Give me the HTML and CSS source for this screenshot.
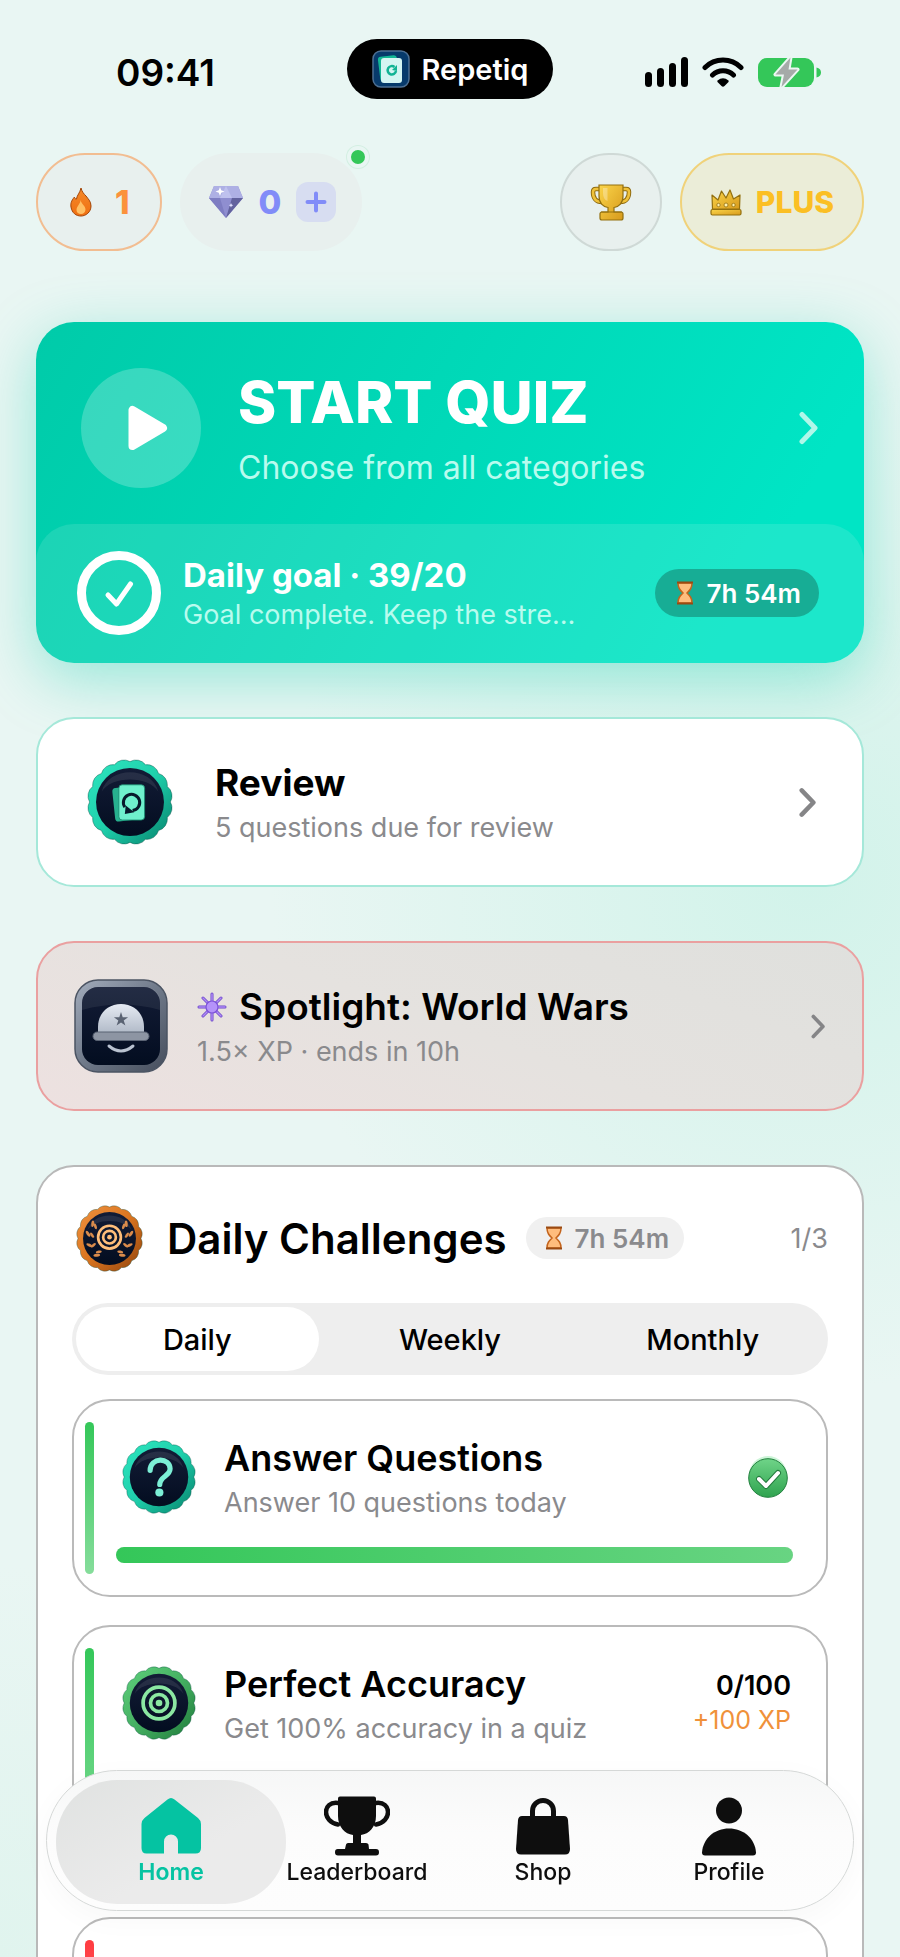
FILE: index.html
```html
<!DOCTYPE html>
<html lang="en">
<head>
    <meta charset="UTF-8">
    <meta name="viewport" content="width=device-width, initial-scale=1.0">
    <title>Repetiq</title>
    <link rel="stylesheet" href="styles.css">
</head>
<body>
    <!-- Shared shapes -->
    <svg class="defs" width="0" height="0" aria-hidden="true">
        <defs>
            <linearGradient id="teal" x1="0" y1="0" x2="1" y2="1">
                <stop offset="0" stop-color="#2ee6c0"/><stop offset=".5" stop-color="#1fcfab"/><stop offset="1" stop-color="#05806a"/>
            </linearGradient>
            <linearGradient id="green" x1="0" y1="0" x2="1" y2="1">
                <stop offset="0" stop-color="#5fd07c"/><stop offset=".5" stop-color="#45b062"/><stop offset="1" stop-color="#1f7a3a"/>
            </linearGradient>
            <linearGradient id="orange" x1="0" y1="0" x2="1" y2="1">
                <stop offset="0" stop-color="#f09340"/><stop offset=".5" stop-color="#d97420"/><stop offset="1" stop-color="#8f430c"/>
            </linearGradient>
            <linearGradient id="night" x1="0" y1="0" x2="0" y2="1">
                <stop offset="0" stop-color="#131c36"/><stop offset="1" stop-color="#030d20"/>
            </linearGradient>
            <linearGradient id="gold" x1="0" y1="0" x2="1" y2="1">
                <stop offset="0" stop-color="#fbd54a"/><stop offset="1" stop-color="#d79a1c"/>
            </linearGradient>
            <linearGradient id="steel" x1="0" y1="0" x2="1" y2="1">
                <stop offset="0" stop-color="#a3adbd"/><stop offset=".5" stop-color="#6f7989"/><stop offset="1" stop-color="#454d5c"/>
            </linearGradient>
            <linearGradient id="helmet" x1="0" y1="0" x2="0" y2="1">
                <stop offset="0" stop-color="#e6ebf3"/><stop offset="1" stop-color="#b1bac8"/>
            </linearGradient>
            <linearGradient id="check" x1="0" y1="0" x2="0" y2="1">
                <stop offset="0" stop-color="#6fd488"/><stop offset="1" stop-color="#2fa34f"/>
            </linearGradient>
            <linearGradient id="flame" x1="0" y1="0" x2="0" y2="1">
                <stop offset="0" stop-color="#f58a2a"/><stop offset="1" stop-color="#ef7012"/>
            </linearGradient>
            <symbol id="scallop" viewBox="0 0 100 100">
                <path stroke="#0b4f45" stroke-opacity=".5" stroke-width="1" d="M50 3A14 14 0 0 1 68 6.6 14 14 0 0 1 83.2 16.8 14 14 0 0 1 93.4 32 14 14 0 0 1 97 50 14 14 0 0 1 93.4 68 14 14 0 0 1 83.2 83.2 14 14 0 0 1 68 93.4 14 14 0 0 1 50 97 14 14 0 0 1 32 93.4 14 14 0 0 1 16.8 83.2 14 14 0 0 1 6.6 68 14 14 0 0 1 3 50 14 14 0 0 1 6.6 32 14 14 0 0 1 16.8 16.8 14 14 0 0 1 32 6.6 14 14 0 0 1 50 3z"/>
                <circle cx="50" cy="50" r="39.5" fill="url(#night)"/>
                <path d="M17 38C25 8 75 8 83 38 72 19 28 19 17 38z" fill="#fff" opacity=".09"/>
            </symbol>
            <symbol id="hourglass" viewBox="0 0 18 24">
                <path d="M2 2h14c0 5-2 7-5 10 3 3 5 5 5 10H2c0-5 2-7 5-10-3-3-5-5-5-10z" fill="#ffbd7d" stroke="#c4641c" stroke-width="1.5"/>
                <path d="M1 1.5h16M1 22.5h16" stroke="#9a4a12" stroke-width="2"/>
            </symbol>
            <symbol id="chevron" viewBox="0 0 20 34">
                <path d="M3 3.5l13 13.5-13 13.5" fill="none" stroke="currentColor" stroke-width="5" stroke-linecap="round" stroke-linejoin="round"/>
            </symbol>
        </defs>
    </svg>

    <div class="app">
        <header class="header">
            <div class="status-bar">
                <time class="clock">09:41</time>
                <div class="island">
                    <svg width="38" height="38" viewBox="0 0 38 38">
                        <rect x="1" y="1" width="36" height="36" rx="8" fill="#073a6b" stroke="#4d6f92" stroke-width="1.5"/>
                        <rect x="7" y="6" width="19" height="25" rx="3" fill="#14b795" transform="rotate(-7 16 18)"/>
                        <rect x="9" y="8" width="21" height="25" rx="3" fill="#d5f5f2"/>
                        <path d="M22.5 17a4.2 4.2 0 1 0 1.5 4" fill="none" stroke="#12b394" stroke-width="2.5"/>
                        <path d="M20 20l5-5v6z" fill="#12b394"/>
                    </svg>
                    <span>Repetiq</span>
                </div>
                <div class="indicators">
                    <svg width="43" height="30" viewBox="0 0 43 30">
                        <rect y="15" width="7" height="15" rx="3.5"/>
                        <rect x="12" y="11" width="7" height="19" rx="3.5"/>
                        <rect x="24" y="6" width="7" height="24" rx="3.5"/>
                        <rect x="36" width="7" height="30" rx="3.5"/>
                    </svg>
                    <svg width="42" height="30" viewBox="0 0 42 30">
                        <path d="M3 10.5a25.5 25.5 0 0 1 36 0M10.5 18a15 15 0 0 1 21 0" fill="none" stroke="#000" stroke-width="5" stroke-linecap="round"/>
                        <path d="M15.5 23.5q5.5-4.5 11 0 .5 1-.5 2l-3.5 3.5q-1.5 1.5-3 0L16 25.5q-1-1-.5-2z"/>
                    </svg>
                    <svg width="64" height="32" viewBox="0 0 64 32">
                        <rect y="2" width="56" height="29" rx="9" fill="#34c759"/>
                        <path d="M58.5 11.500v10q4.500-1 4.500-5t-4.500-5z" fill="#34c759"/>
                        <path d="M32.5 1.500L17.500 18.500h8.500L23.500 31 39.500 13.500h-9z" fill="#a5aaa8" stroke="#ebf7f2" stroke-width="4" stroke-linejoin="round" paint-order="stroke"/>
                    </svg>
                </div>
            </div>

            <div class="stats">
                <button class="pill streak" aria-label="1 day streak">
                    <svg width="22" height="30" viewBox="0 0 22 30">
                        <path d="M11 1c-1 5-4 7-4.500 11C5 12 4.500 11 4.500 10 1 14 .5 17 1 20c1 6 5 9 10 9s10-4 10-10c0-5-3-7-5-10-2-2-4-4-5-8z" fill="url(#flame)" stroke="#a34508"/>
                        <path d="M10.500 13c0 4-4 6-4 10 0 2.500 2 4 4.500 4s4.500-2 4.500-4.500c0-4-4-5-5-9.500z" fill="#ffbf63"/>
                    </svg>
                    <span>1</span>
                </button>
                <button class="pill gems" aria-label="0 gems, add more">
                    <svg width="36" height="34" viewBox="0 0 36 34">
                        <path d="M6 1h24l5 12-17 20L1 13z" fill="#8f8ed0"/>
                        <path d="M6 1h24l5 12H1z" fill="#aeb0e4"/>
                        <path d="M12 13l6-12 6 12z" fill="#bfc1ee"/>
                        <path d="M24 13h11L18 33z" fill="#62629e"/>
                        <path d="M1 13h11l6 20z" fill="#7e7dc2"/>
                        <path d="M12 2l1.200 3.300 3.300 1.200-3.300 1.200L12 11l-1.200-3.300-3.300-1.200 3.300-1.200z" fill="#fff"/>
                        <path d="M23 18l.7 1.500 1.500.7-1.500.7-.7 1.500-.7-1.500-1.500-.7 1.500-.7z" fill="#dfe0ff"/>
                    </svg>
                    <span>0</span>
                    <svg width="40" height="40" viewBox="0 0 40 40">
                        <rect width="40" height="40" rx="12" fill="#d7ddf1"/>
                        <path d="M20 11.500v17M11.500 20h17" stroke="#818cf8" stroke-width="4" stroke-linecap="round"/>
                    </svg>
                    <i class="dot"></i>
                </button>
                <button class="pill trophy" aria-label="Achievements">
                    <svg width="42" height="37" viewBox="0 0 42 37">
                        <path d="M10 5H6q-3 0-3 3c0 6 3 10 9 10M32 5h4q3 0 3 3c0 6-3 10-9 10" fill="none" stroke="#8f6b10" stroke-width="4.500"/>
                        <path d="M10 5H6q-3 0-3 3c0 6 3 10 9 10M32 5h4q3 0 3 3c0 6-3 10-9 10" fill="none" stroke="#efc13a" stroke-width="2.500"/>
                        <path d="M9 1h24v11c0 7-4 11-9 11.500V28h7q2 0 2 2v4q0 2-2 2H12q-2 0-2-2v-4q0-2 2-2h6v-4.500C13 23 9 19 9 12z" fill="url(#gold)" stroke="#93700f" stroke-width="1.200"/>
                        <path d="M11 28h21" stroke="#93700f"/>
                        <path d="M13 4h4.500v13c-3-1-4.500-4-4.500-8z" fill="#fff" opacity=".3"/>
                    </svg>
                </button>
                <button class="pill plus">
                    <svg width="32" height="27" viewBox="0 0 32 27">
                        <path d="M2.500 20L2 6l6 5 3.500-9L16 9l4-8 3.500 9L30 6l-.5 14z" fill="url(#gold)" stroke="#93700f" stroke-width="1.200" stroke-linejoin="round"/>
                        <rect x="1" y="20.500" width="30" height="5.500" rx="1.500" fill="url(#gold)" stroke="#93700f" stroke-width="1.200"/>
                        <g fill="#fff1b0" stroke="#93700f" stroke-width=".8"><circle cx="8.500" cy="16" r="1.700"/><circle cx="16" cy="16" r="2"/><circle cx="23.500" cy="16" r="1.700"/></g>
                    </svg>
                    <span>PLUS</span>
                </button>
            </div>
        </header>

        <main class="content">
            <section class="hero">
                <a class="hero-main" href="#quiz">
                    <span class="play">
                        <svg width="40" height="46" viewBox="0 0 40 46"><path d="M4.500 5v36L35 23z" fill="#fff" stroke="#fff" stroke-width="8" stroke-linejoin="round"/></svg>
                    </span>
                    <span class="text">
                        <strong class="hero-title">START QUIZ</strong>
                        <span class="hero-subtitle">Choose from all categories</span>
                    </span>
                    <svg class="chevron" width="20" height="34"><use href="#chevron"/></svg>
                </a>
                <div class="goal">
                    <svg width="84" height="84" viewBox="0 0 84 84" fill="none" stroke="#fff">
                        <circle cx="42" cy="42" r="37.500" stroke-width="9"/>
                        <path d="M31 44l8.500 9L53.500 33" stroke-width="5" stroke-linecap="round" stroke-linejoin="round"/>
                    </svg>
                    <span class="text">
                        <strong class="goal-title">Daily goal · 39/20</strong>
                        <span class="goal-subtitle">Goal complete. Keep the stre…</span>
                    </span>
                    <span class="timer timer-dark">
                        <svg width="18" height="24"><use href="#hourglass"/></svg>
                        7h 54m
                    </span>
                </div>
            </section>

            <a class="card review" href="#review">
                <svg width="86" height="86" viewBox="0 0 100 100">
                    <use href="#scallop" fill="url(#teal)"/>
                    <rect x="31" y="33" width="26" height="39" rx="4" fill="#27b08e" transform="rotate(-6 42 52)"/>
                    <rect x="37" y="30" width="30" height="41" rx="4" fill="#6ff0cd" stroke="#1a8a70"/>
                    <path d="M44 56a9.500 9.500 0 1 1 9 4" fill="none" stroke="#07192b" stroke-width="3.500"/>
                    <path d="M45 54l-1 10 11-2z" fill="#07192b"/>
                </svg>
                <span class="text">
                    <strong class="title">Review</strong>
                    <span class="subtitle">5 questions due for review</span>
                </span>
                <svg class="chevron" width="18" height="31"><use href="#chevron"/></svg>
            </a>

            <a class="card spotlight" href="#spotlight">
                <svg width="94" height="94" viewBox="0 0 94 94">
                    <rect x="1" y="1" width="92" height="92" rx="23" fill="url(#steel)" stroke="#4b5463" stroke-width="1.500"/>
                    <rect x="8" y="8" width="78" height="78" rx="16" fill="url(#night)"/>
                    <path d="M8 31V24Q8 8 24 8h46q16 0 16 16v7Q47 20 8 31z" fill="#fff" opacity=".07"/>
                    <path d="M24 54V48c0-14 10-23 23-23s23 9 23 23v6z" fill="url(#helmet)"/>
                    <path d="M47 33l1.700 5.200h5.400l-4.400 3.200 1.700 5.200-4.400-3.200-4.400 3.200 1.700-5.200-4.400-3.200h5.400z" fill="#5a6373"/>
                    <rect x="19" y="53" width="56" height="8.500" rx="4.200" fill="#8d95a3" stroke="#5b6474"/>
                    <path d="M35 67q12 10 24 0" fill="none" stroke="#b9c2d0" stroke-width="3" stroke-linecap="round"/>
                </svg>
                <span class="text">
                    <strong class="title with-icon">
                        <svg width="30" height="30" viewBox="0 0 30 30">
                            <g stroke-linecap="round" stroke="#6b46c9" stroke-width="3"><path d="M15 2v26M2 15h26M6 6l18 18M24 6L6 24"/></g>
                            <g stroke-linecap="round" stroke="#b08bf5" stroke-width="1.500"><path d="M15 2v26M2 15h26M6 6l18 18M24 6L6 24"/></g>
                            <circle cx="15" cy="15" r="6" fill="#b593fa" stroke="#7c52d8" stroke-width="1.200"/>
                        </svg>
                        Spotlight: World Wars
                    </strong>
                    <span class="subtitle">1.5× XP · ends in 10h</span>
                </span>
                <svg class="chevron" width="15" height="25"><use href="#chevron"/></svg>
            </a>

            <section class="panel">
                <div class="panel-head">
                    <svg width="67" height="67" viewBox="0 0 100 100">
                        <use href="#scallop" fill="url(#orange)"/>
                        <g fill="none" stroke="#ffbe7a" stroke-width="4"><circle cx="50" cy="48" r="17"/><circle cx="50" cy="48" r="9.500"/></g>
                        <circle cx="50" cy="48" r="3.500" fill="#ffbe7a"/>
                        <g fill="#d98b4c">
                            <g id="leaves">
                                <ellipse cx="25" cy="28" rx="2.200" ry="5" transform="rotate(5 25 28)"/><ellipse cx="29" cy="32" rx="2" ry="4.500" transform="rotate(-20 29 32)"/>
                                <ellipse cx="18" cy="43" rx="2.200" ry="5" transform="rotate(-35 18 43)"/><ellipse cx="24" cy="45" rx="2" ry="4.500" transform="rotate(-35 24 45)"/>
                                <ellipse cx="20" cy="60" rx="2.200" ry="5" transform="rotate(-65 20 60)"/><ellipse cx="26" cy="60" rx="2" ry="4.500" transform="rotate(50 26 60)"/>
                                <ellipse cx="31" cy="75" rx="2.200" ry="5" transform="rotate(80 31 75)"/><ellipse cx="34" cy="70" rx="2" ry="4.500" transform="rotate(80 34 70)"/>
                            </g>
                            <use href="#leaves" transform="translate(100 0) scale(-1 1)"/>
                        </g>
                    </svg>
                    <h2>Daily Challenges</h2>
                    <span class="timer">
                        <svg width="18" height="24"><use href="#hourglass"/></svg>
                        7h 54m
                    </span>
                    <span class="count">1/3</span>
                </div>

                <div class="tabs" role="tablist">
                    <button class="tab active" role="tab" aria-selected="true">Daily</button>
                    <button class="tab" role="tab" aria-selected="false">Weekly</button>
                    <button class="tab" role="tab" aria-selected="false">Monthly</button>
                </div>

                <article class="challenge">
                    <i class="stripe"></i>
                    <div class="challenge-body">
                        <div class="challenge-row">
                            <svg width="74" height="74" viewBox="0 0 100 100">
                                <use href="#scallop" fill="url(#teal)"/>
                                <path d="M38 41c0-18 27-18 27-2 0 10-14 10-14 21" fill="none" stroke="#7cefd6" stroke-width="7" stroke-linecap="round"/>
                                <circle cx="50.500" cy="71" r="5.500" fill="#7cefd6"/>
                            </svg>
                            <div class="text">
                                <h3 class="title">Answer Questions</h3>
                                <p class="subtitle">Answer 10 questions today</p>
                            </div>
                            <svg class="done" width="40" height="44" viewBox="0 0 40 44">
                                <circle cx="20" cy="20" r="19" fill="#cdf5d8"/>
                                <circle cx="20" cy="23" r="19.300" fill="url(#check)" stroke="#23803f"/>
                                <path d="M11 24l7 7 12-13" fill="none" stroke="#237a3d" stroke-width="6" stroke-linecap="round" stroke-linejoin="round"/>
                                <path d="M11 24l7 7 12-13" fill="none" stroke="#fff" stroke-width="4" stroke-linecap="round" stroke-linejoin="round"/>
                            </svg>
                        </div>
                        <div class="progress"><div class="progress-fill" style="width: 100%"></div></div>
                    </div>
                </article>

                <article class="challenge tall">
                    <i class="stripe"></i>
                    <div class="challenge-body">
                        <div class="challenge-row">
                            <svg width="74" height="74" viewBox="0 0 100 100">
                                <use href="#scallop" fill="url(#green)"/>
                                <g fill="none" stroke="#8be8a2" stroke-width="5"><circle cx="50" cy="50" r="21.500"/><circle cx="50" cy="50" r="11.500"/></g>
                                <circle cx="50" cy="50" r="4.500" fill="#8be8a2"/>
                            </svg>
                            <div class="text">
                                <h3 class="title">Perfect Accuracy</h3>
                                <p class="subtitle">Get 100% accuracy in a quiz</p>
                            </div>
                            <div class="reward">
                                <strong>0/100</strong>
                                <span>+100 XP</span>
                            </div>
                        </div>
                        <div class="progress"><div class="progress-fill" style="width: 0%"></div></div>
                    </div>
                </article>

                <article class="challenge hard">
                    <i class="stripe"></i>
                </article>
            </section>
        </main>

        <nav class="tab-bar">
            <a class="active" href="#home">
                <svg width="66" height="60" viewBox="0 0 66 60"><path fill="currentColor" d="M29.500 3.500q3.500-3 7 0L60 22q3 2.500 3 6v24q0 5.500-5.500 5.500H40V45.500a7 7 0 0 0-14 0V57.500H8.500Q3.500 57.500 3.500 52V28q0-3.500 3-6z"/></svg>
                Home
            </a>
            <a href="#leaderboard">
                <svg width="66" height="60" viewBox="0 0 66 60">
                    <path fill="currentColor" d="M16 .5h34q2 0 2 2V20c0 11-7 18-15 19v8h5q2 0 2.500 1.500L45 53h7q3 0 3 3.200T52 59.500H14q-3 0-3-3.300T14 53h7l1-4.500Q22.500 47 24 47h5v-8C21 38 14 31 14 20V2.500q0-2 2-2z"/>
                    <path fill="none" stroke="currentColor" stroke-width="4.500" stroke-linecap="round" d="M14 7C-2 5-2 26 14 28.500M52 7C68 5 68 26 52 28.500"/>
                </svg>
                Leaderboard
            </a>
            <a href="#shop">
                <svg width="66" height="60" viewBox="0 0 66 60">
                    <path fill="currentColor" d="M12 20h42q3.500 0 4 4l2 29q0 5.500-5 5.500H11q-5 0-5-5.500l2-29q.5-4 4-4z"/>
                    <path fill="none" stroke="currentColor" stroke-width="5" d="M22.500 21v-6a10.500 10.500 0 0 1 21 0v6"/>
                </svg>
                Shop
            </a>
            <a href="#profile">
                <svg width="66" height="60" viewBox="0 0 66 60">
                    <circle cx="33" cy="14.500" r="13" fill="currentColor"/>
                    <path fill="currentColor" d="M9 59.500q-3 0-3-3C7 42 19 32.500 33 32.500S59 42 60 56.500q0 3-3 3z"/>
                </svg>
                Profile
            </a>
        </nav>
    </div>
</body>
</html>
```
FILE: styles.css
```css
* {
    margin: 0;
    padding: 0;
    box-sizing: border-box;
}

body {
    font-family: Inter, 'Liberation Sans', sans-serif;
    color: #000;
    background:
        radial-gradient(ellipse 60% 26% at 90% 45%, #d2f3ea 0%, rgba(210, 243, 234, 0) 100%),
        radial-gradient(ellipse 40% 20% at 0% 100%, #e0f4ee 0%, rgba(224, 244, 238, 0) 100%),
        #e9f6f3;
}

svg {
    display: block;
    flex: none;
}

a {
    color: inherit;
    text-decoration: none;
}

button {
    font: inherit;
    color: inherit;
    border: none;
    background: none;
    cursor: pointer;
}

.defs {
    position: absolute;
}

.app {
    height: 100vh;
    display: flex;
    flex-direction: column;
    overflow: hidden;
}

/* Header */
.header {
    padding: 39px 36px 18px;
}

.status-bar {
    display: grid;
    grid-template-columns: 1fr auto 1fr;
    align-items: center;
    height: 60px;
    padding: 0 42px;
    margin-bottom: 54px;
}

.clock {
    padding: 8px 0 0 38px;
    font-size: 37px;
    font-weight: 600;
    line-height: 44px;
}

.island {
    display: flex;
    align-items: center;
    gap: 12px;
    height: 60px;
    padding: 0 25px;
    border-radius: 30px;
    background: #000;
    color: #fff;
    font-size: 29px;
    font-weight: 600;
}

.indicators {
    display: flex;
    align-items: center;
    justify-content: flex-end;
    gap: 14px;
    padding-top: 6px;
}

.stats {
    display: flex;
    gap: 18px;
}

.pill {
    display: flex;
    align-items: center;
    justify-content: center;
    height: 98px;
    border: 2px solid transparent;
    border-radius: 49px;
    background: #e8f0ee;
    font-size: 33px;
    font-weight: 800;
}

.streak {
    gap: 23px;
    padding: 0 30px 0 32px;
    border-color: #f2bd91;
    color: #fb923c;
}

.gems {
    position: relative;
    gap: 15px;
    padding: 0 24px 0 26px;
    color: #818cf8;
}

.dot {
    position: absolute;
    top: -9px;
    right: -9px;
    width: 22px;
    height: 22px;
    border: 4px solid #e9f6f3;
    border-radius: 50%;
    background: #34c759;
    box-shadow: 0 0 0 1px #d3efe2;
}

.trophy {
    width: 102px;
    margin-left: auto;
    border-color: #cfd9d6;
}

.plus {
    gap: 14px;
    padding: 0 28px;
    border-color: #f0d27a;
    background: #ebedd8;
    color: #fbbf24;
    font-size: 30px;
}

/* Content */
.content {
    flex: 1;
    min-height: 0;
    display: flex;
    flex-direction: column;
    gap: 54px;
    padding: 53px 36px 0;
    overflow: hidden;
}

.content > * {
    flex: none;
}

.text {
    flex: 1;
    min-width: 0;
    display: flex;
    flex-direction: column;
    white-space: nowrap;
}

.hero {
    border-radius: 38px;
    background: linear-gradient(120deg, #00cba9, #00e5c5 85%);
    box-shadow: 0 16px 60px rgba(0, 205, 170, 0.36);
    color: #fff;
}

.hero-main {
    display: flex;
    align-items: center;
    gap: 37px;
    padding: 46px 45px 36px;
}

.play {
    display: flex;
    align-items: center;
    justify-content: center;
    width: 120px;
    height: 120px;
    padding-left: 14px;
    border-radius: 50%;
    background: rgba(255, 255, 255, 0.22);
}

.hero-main .text {
    gap: 14px;
    padding-top: 2px;
}

.hero-title {
    font-size: 58px;
    font-weight: 800;
    line-height: 64px;
}

.hero-subtitle {
    font-size: 32px;
    line-height: 40px;
    color: #b8fbee;
}

.hero .chevron {
    color: #b0f7e9;
}

.goal {
    display: flex;
    align-items: center;
    gap: 22px;
    padding: 27px 45px 28px 41px;
    border-radius: 38px;
    background: rgba(255, 255, 255, 0.11);
}

.goal-title {
    font-size: 33px;
    font-weight: 700;
    line-height: 44px;
}

.goal-subtitle {
    font-size: 27px;
    line-height: 36px;
    color: #b8fbee;
}

.timer {
    display: flex;
    align-items: center;
    gap: 12px;
    height: 42px;
    padding: 0 15px 0 19px;
    border-radius: 21px;
    background: #f0f0f0;
    color: #8a8a8d;
    font-size: 26px;
    font-weight: 600;
    white-space: nowrap;
}

.timer-dark {
    height: 48px;
    padding: 0 18px 0 21px;
    border-radius: 24px;
    background: #17ad95;
    color: #fff;
}

.card {
    display: flex;
    align-items: center;
    height: 170px;
    border: 2px solid #a5e8d9;
    border-radius: 38px;
    background: #fff;
}

.card .text,
.challenge .text {
    padding-top: 4px;
}

.card .chevron {
    color: #858587;
}

.review {
    gap: 42px;
    padding: 0 45px 0 49px;
}

.spotlight {
    gap: 29px;
    padding: 0 36px;
    border-color: #eaa0a0;
    background: linear-gradient(20deg, #ede1e0, #e5e2df 50%, #dfe0dd);
}

.title {
    font-size: 36px;
    font-weight: 600;
    line-height: 48px;
}

.card .title {
    font-size: 37px;
}

.review .title {
    font-weight: 700;
}

.with-icon {
    display: flex;
    align-items: center;
    gap: 12px;
}

.subtitle {
    font-size: 27px;
    line-height: 42px;
    color: #8a8a8d;
}

/* Daily challenges */
.panel {
    padding: 38px 34px;
    border: 2px solid #b9b9b9;
    border-radius: 38px;
    background: #fff;
}

.panel-head {
    display: flex;
    align-items: center;
    height: 66px;
    padding-left: 4px;
    margin-bottom: 32px;
}

.panel-head h2 {
    margin: 0 19px 0 24px;
    font-size: 42px;
    font-weight: 600;
    white-space: nowrap;
}

.count {
    margin-left: auto;
    color: #8a8a8d;
    font-size: 27px;
}

.tabs {
    display: grid;
    grid-template-columns: repeat(3, 1fr);
    gap: 10px;
    padding: 4px;
    margin-bottom: 24px;
    border-radius: 36px;
    background: #eeeeee;
}

.tab {
    height: 64px;
    border-radius: 32px;
    font-size: 29px;
    font-weight: 500;
}

.tab.active {
    background: #fff;
}

.challenge {
    display: flex;
    gap: 22px;
    min-height: 198px;
    padding: 21px 33px 21px 11px;
    margin-bottom: 28px;
    border: 2px solid #bababa;
    border-radius: 38px;
}

.challenge.tall {
    min-height: 264px;
}

.stripe {
    width: 9px;
    border-radius: 5px;
    background: linear-gradient(#34c759, #86dd9b);
}

.hard .stripe {
    background: linear-gradient(#ff3b40, #ff8a8d);
}

.challenge-body {
    flex: 1;
    min-width: 0;
    padding-top: 18px;
}

.challenge-row {
    display: flex;
    align-items: center;
    gap: 28px;
    height: 74px;
    padding-left: 6px;
    margin-bottom: 33px;
}

.done {
    margin-right: 5px;
}

.reward {
    display: flex;
    flex-direction: column;
    padding-right: 2px;
    text-align: right;
    line-height: 35px;
}

.reward strong {
    font-size: 27px;
    font-weight: 600;
}

.reward span {
    font-size: 25px;
    color: #f0913a;
}

.progress {
    height: 16px;
    border-radius: 8px;
    background: #eeeeee;
}

.progress-fill {
    height: 16px;
    border-radius: 8px;
    background: linear-gradient(90deg, #34c759, #68d482);
}

/* Bottom bar */
.tab-bar {
    position: fixed;
    right: 46px;
    bottom: 46px;
    left: 46px;
    display: grid;
    grid-template-columns: repeat(4, 1fr);
    height: 141px;
    padding: 25px 31px;
    border: 1px solid #d5d8d7;
    border-radius: 71px;
    background: linear-gradient(#f6f7f7, #fcfcfc 45%, #fdfdfd);
    box-shadow: 0 8px 30px rgba(0, 0, 0, 0.03);
}

.tab-bar a {
    position: relative;
    display: flex;
    flex-direction: column;
    align-items: center;
    color: #0e0e0e;
    font-size: 23px;
    font-weight: 500;
    line-height: 32px;
}

.tab-bar .active {
    isolation: isolate;
    color: #05c3a2;
    font-weight: 600;
}

.tab-bar .active::before {
    content: "";
    position: absolute;
    z-index: -1;
    inset: -16px -22px;
    border-radius: 61px;
    background: linear-gradient(150deg, #e0e2e1, #ebebeb 60%);
}
```
